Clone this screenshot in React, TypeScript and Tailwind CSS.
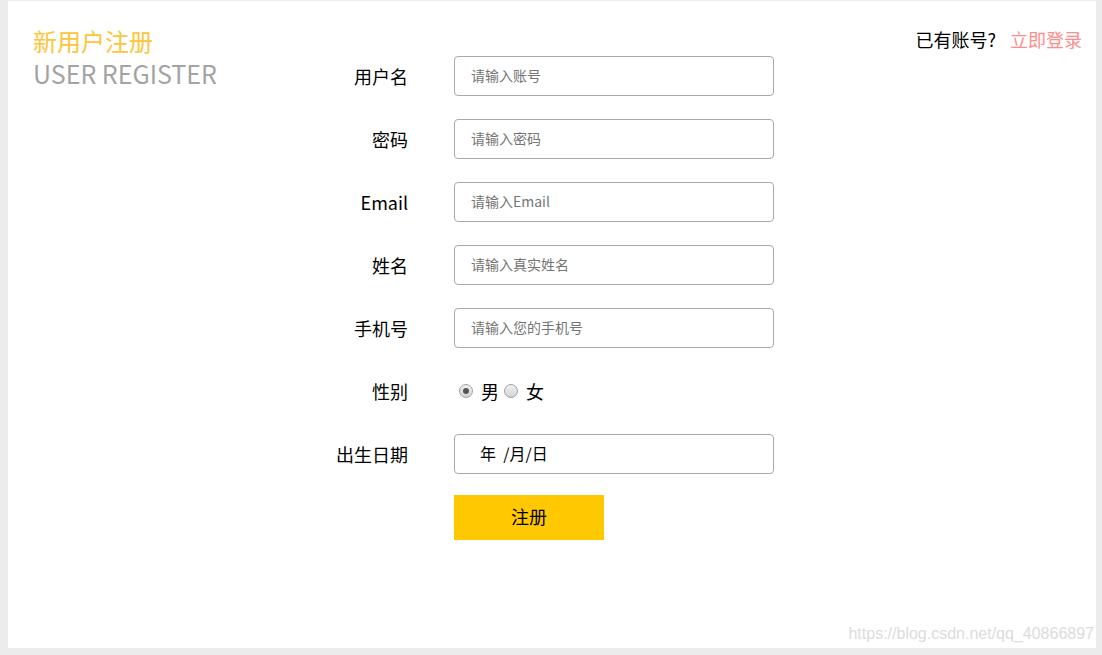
import React from "react";

const cjk = "font-['Microsoft_YaHei','Noto_Sans_CJK_SC',sans-serif]";

const fields = [
  { label: "用户名", placeholder: "请输入账号", type: "text" },
  { label: "密码", placeholder: "请输入密码", type: "password" },
  { label: "Email", placeholder: "请输入Email", type: "text" },
  { label: "姓名", placeholder: "请输入真实姓名", type: "text" },
  { label: "手机号", placeholder: "请输入您的手机号", type: "text" },
];

function Radio({ checked }: { checked?: boolean }) {
  return (
    <span className="flex h-[14px] w-[14px] items-center justify-center rounded-full border border-[#a0a0a0] bg-gradient-to-b from-[#f2f2f2] to-[#d4d4d4]">
      {checked && <span className="h-[6px] w-[6px] rounded-full bg-[#555]" />}
    </span>
  );
}

function Label({ children }: { children: React.ReactNode }) {
  return <label className="w-[100px] text-right text-[18px] leading-6 text-black">{children}</label>;
}

export default function App() {
  return (
    <div className={`h-[655px] w-[1102px] bg-[#ececec] pb-[7px] pl-2 pr-[6px] pt-px ${cjk}`}>
      <div className="relative flex h-full items-start bg-white pl-[25px] pr-[14px] pt-[25px]">
        <div className="-mt-[2px] w-[275px] shrink-0">
          <div className="text-[24px] leading-[34px] text-[#fcc53a]">新用户注册</div>
          <div className="text-[25px] leading-[30px] text-[#a3a3a3]">USER REGISTER</div>
        </div>

        <form className="mt-[30px] flex flex-col gap-[23px]">
          {fields.map((f) => (
            <div key={f.label} className="flex h-10 items-center gap-[46px]">
              <Label>{f.label}</Label>
              <input
                type={f.type}
                placeholder={f.placeholder}
                className="h-10 w-[320px] rounded border border-[#a9a9a9] px-4 pb-[3px] text-[14px] text-black outline-none placeholder:text-[#757575]"
              />
            </div>
          ))}

          <div className="flex h-10 items-center gap-[46px]">
            <Label>性别</Label>
            <div className="flex items-center text-[18px] leading-6 text-black">
              <span className="ml-[5px]"><Radio checked /></span>
              <span className="ml-[8px]">男</span>
              <span className="ml-[5px]"><Radio /></span>
              <span className="ml-[8px]">女</span>
            </div>
          </div>

          <div className="flex h-10 items-center gap-[46px]">
            <Label>出生日期</Label>
            <div className="flex h-10 w-[320px] items-center rounded border border-[#a9a9a9] pb-[2px] pl-[25px] text-[16px] text-black">
              年&nbsp;&nbsp;/月/日
            </div>
          </div>

          <div className="-mt-[2px] flex gap-[46px]">
            <span className="w-[100px]" />
            <button type="button" className="h-[45px] w-[150px] bg-[#ffc800] pb-[2px] text-[18px] text-black">
              注册
            </button>
          </div>
        </form>

        <div className="ml-auto mt-px flex text-[18px] leading-6">
          <span className="text-black">已有账号?</span>
          <a className="ml-[14px] text-[#ff8c8c]">立即登录</a>
        </div>

        <div className="absolute bottom-[2px] right-[2px] font-['Liberation_Sans',sans-serif] text-[16px] text-[#dcdcdc]">
          https://blog.csdn.net/qq_40866897
        </div>
      </div>
    </div>
  );
}
